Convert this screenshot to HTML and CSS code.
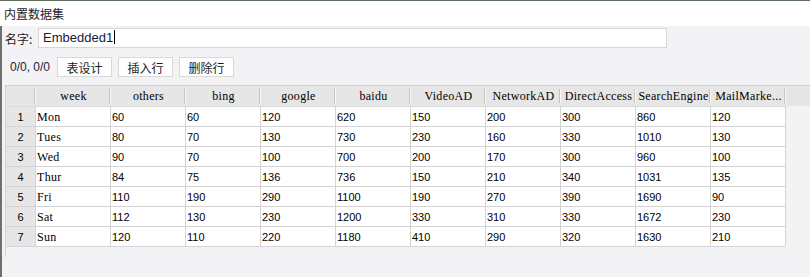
FILE: index.html
```html
<!DOCTYPE html>
<html lang="zh">
<head>
  <meta charset="UTF-8" />
  <title>内置数据集</title>
  <link rel="stylesheet" href="styles.css">
</head>
<body>
  <div class="title">内置数据集</div>

  <div class="panel">
    <div class="name-row">
      <label>名字:</label>
      <div class="name-input">Embedded1<span class="caret"></span></div>
    </div>

    <div class="tools">
      <span class="pos">0/0, 0/0</span>
      <button>表设计</button>
      <button>插入行</button>
      <button>删除行</button>
    </div>

    <!-- 数据表 -->
    <div class="sheet">
      <div class="hd"></div>
      <div class="hd">week</div>
      <div class="hd">others</div>
      <div class="hd">bing</div>
      <div class="hd">google</div>
      <div class="hd">baidu</div>
      <div class="hd">VideoAD</div>
      <div class="hd">NetworkAD</div>
      <div class="hd">DirectAccess</div>
      <div class="hd">SearchEngine</div>
      <div class="hd">MailMarke...</div>

      <div class="num">1</div><div class="c txt">Mon</div><div class="c">60</div><div class="c">60</div><div class="c">120</div><div class="c">620</div><div class="c">150</div><div class="c">200</div><div class="c">300</div><div class="c">860</div><div class="c">120</div>
      <div class="num">2</div><div class="c txt">Tues</div><div class="c">80</div><div class="c">70</div><div class="c">130</div><div class="c">730</div><div class="c">230</div><div class="c">160</div><div class="c">330</div><div class="c">1010</div><div class="c">130</div>
      <div class="num">3</div><div class="c txt">Wed</div><div class="c">90</div><div class="c">70</div><div class="c">100</div><div class="c">700</div><div class="c">200</div><div class="c">170</div><div class="c">300</div><div class="c">960</div><div class="c">100</div>
      <div class="num">4</div><div class="c txt">Thur</div><div class="c">84</div><div class="c">75</div><div class="c">136</div><div class="c">736</div><div class="c">150</div><div class="c">210</div><div class="c">340</div><div class="c">1031</div><div class="c">135</div>
      <div class="num">5</div><div class="c txt">Fri</div><div class="c">110</div><div class="c">190</div><div class="c">290</div><div class="c">1100</div><div class="c">190</div><div class="c">270</div><div class="c">390</div><div class="c">1690</div><div class="c">90</div>
      <div class="num">6</div><div class="c txt">Sat</div><div class="c">112</div><div class="c">130</div><div class="c">230</div><div class="c">1200</div><div class="c">330</div><div class="c">310</div><div class="c">330</div><div class="c">1672</div><div class="c">230</div>
      <div class="num">7</div><div class="c txt">Sun</div><div class="c">120</div><div class="c">110</div><div class="c">220</div><div class="c">1180</div><div class="c">410</div><div class="c">290</div><div class="c">320</div><div class="c">1630</div><div class="c">210</div>
    </div>
  </div>
</body>
</html>
```

FILE: styles.css
```css
html, body {
  box-sizing: border-box;
  margin: 0;
  padding: 0;
  height: 100%;
  overflow: hidden;
  font-family: "Liberation Sans", "Noto Sans CJK SC", sans-serif;
  background: #f3f3f5;
  color: #1c1c28;
}
*, *::before, *::after {
  box-sizing: inherit;
}

.title {
  height: 26px;
  line-height: 25px;
  padding-left: 4px;
  background: #fff;
  border-top: 1px solid #5e6e5f;
  font-family: "Noto Sans CJK SC", sans-serif;
  font-size: 12px;
}

.panel {
  height: calc(100% - 26px);
  border-left: 2px solid #6d716e;
  padding: 2px 0 0 3px;
}

.name-row {
  display: flex;
  align-items: center;
  height: 20px;
}
.name-row label {
  width: 33px;
  font-family: "Noto Sans CJK SC", sans-serif;
  font-size: 12px;
}
.name-input {
  width: 629px;
  height: 20px;
  line-height: 18px;
  padding-left: 4px;
  background: #fff;
  border: 1px solid #d6d6d6;
  font-size: 13px;
  color: #1a1a40;
}
.caret {
  display: inline-block;
  width: 1px;
  height: 14px;
  margin-left: 1px;
  vertical-align: -2px;
  background: #000;
}

.tools {
  display: flex;
  align-items: center;
  gap: 6px;
  height: 20px;
  margin-top: 9px;
  padding-left: 5px;
}
.pos {
  font-size: 12px;
  margin-right: 1px;
  color: #1a1a40;
}
.tools button {
  width: 55px;
  height: 20px;
  padding: 0;
  background: #fff;
  border: 1px solid #d9d9d9;
  font-family: "Noto Sans CJK SC", sans-serif;
  font-size: 12px;
  color: #1c1c28;
}

/* 表格：行号列 + 10 列数据 */
.sheet {
  display: grid;
  grid-template-columns: 30px repeat(10, 75px);
  grid-auto-rows: 20px;
  grid-template-rows: 21px;
  margin-top: 8px;
  height: calc(100% - 77px);
  align-content: start;
  border-top: 1px solid #d2d2d2;
  border-left: 1px solid #d2d2d2;
  background: linear-gradient(#e6e6e6, #e6e6e6) top / 100% 20px no-repeat;
}

.hd {
  height: 21px;
  line-height: 20px;
  overflow: hidden;
  white-space: nowrap;
  text-align: center;
  background:
    linear-gradient(#c2c2c2, #c2c2c2) right 1px top 3px / 1px 14px no-repeat,
    linear-gradient(#fafafa, #fafafa) right 0 top 3px / 1px 14px no-repeat,
    #e6e6e6;
  border-bottom: 1px solid #dadada;
  font-family: "Liberation Serif", serif;
  font-size: 12px;
  letter-spacing: 0.3px;
  color: #000;
}

.num, .c {
  height: 20px;
  border-right: 1px solid #d4d4d4;
  border-bottom: 1px solid #d4d4d4;
  font-size: 11px;
  line-height: 18px;
  padding-top: 1px;
  color: #000;
}
.num {
  text-align: center;
  background: #e6e6e6;
}
.c {
  padding-left: 1px;
  background: #fff;
  overflow: hidden;
  white-space: nowrap;
}
.c.txt {
  font-family: "Liberation Serif", serif;
  font-size: 12px;
  letter-spacing: 0.3px;
}
```
